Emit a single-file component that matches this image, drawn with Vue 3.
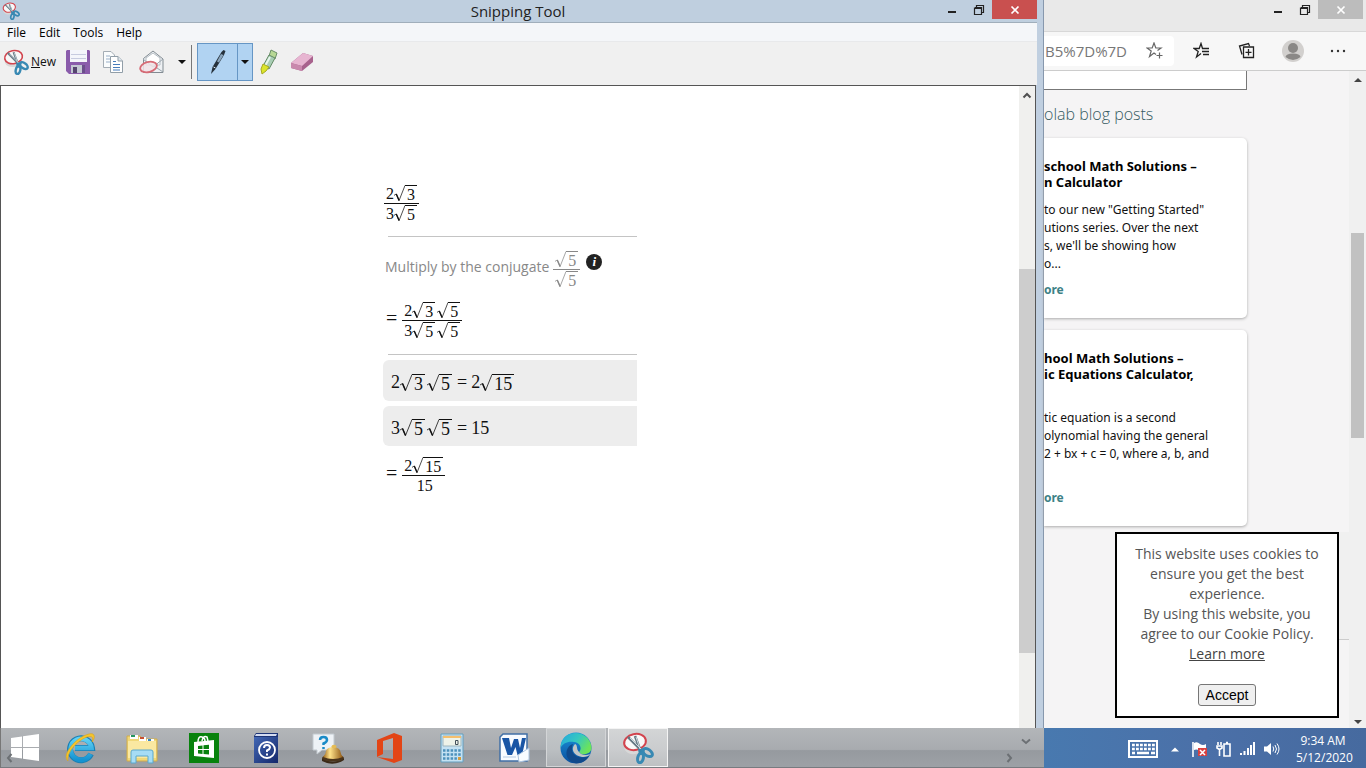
<script setup>
const menus = ['File', 'Edit', 'Tools', 'Help']

const steps = {
  first: { top: [{ n: '2' }, { r: '3' }], bottom: [{ n: '3' }, { r: '5' }] },
  conjugate: { top: [{ r: '5' }], bottom: [{ r: '5' }] },
  product: {
    top: [{ n: '2' }, { r: '3' }, { r: '5' }],
    bottom: [{ n: '3' }, { r: '5' }, { r: '5' }]
  },
  result: { top: [{ n: '2' }, { r: '15' }], bottom: [{ n: '15' }] }
}
const notes = [
  [{ n: '2' }, { r: '3' }, { r: '5' }, { o: '=' }, { n: '2' }, { r: '15' }],
  [{ n: '3' }, { r: '5' }, { r: '5' }, { o: '=' }, { n: '15' }]
]
const rows = [
  { key: 'first', lead: false },
  { key: 'conjugate', lead: false, hint: true },
  { key: 'product', lead: true },
  { key: 'result', lead: true, notes: true }
]
const posts = [
  {
    title: ['school Math Solutions –', 'n Calculator'],
    text: ['to our new "Getting Started"', 'utions series. Over the next', "s, we'll be showing how", 'o...']
  },
  {
    title: ['hool Math Solutions –', 'ic Equations Calculator,', '\u00a0'],
    text: ['tic equation is a second', 'olynomial having the general', '2 + bx + c = 0, where a, b, and', '\u00a0']
  }
]
</script>

<template>
  <div class="desktop">
    <svg class="defs" aria-hidden="true">
      <defs>
        <symbol id="snip" viewBox="0 0 32 32">
          <ellipse cx="13" cy="14" rx="11" ry="8" transform="rotate(-12 13 14)" fill="#d8d8d8" />
          <ellipse cx="13" cy="10" rx="11" ry="8" transform="rotate(-12 13 10)" fill="#f8f8f8" stroke="#d2444e" stroke-width="2" />
          <path d="M6 5 L21 20 M13 4 L19 20" stroke="#667984" stroke-width="2.600" />
          <path d="M8 6 L20 18 M14 5 L18 17" stroke="#d6e2e8" stroke-width="0.900" />
          <path d="M16 17 L23 17 L22 22 L17 23Z" fill="#3a85ab" />
          <ellipse cx="25.500" cy="20.500" rx="5.500" ry="3.200" transform="rotate(35 25.500 20.500)" fill="none" stroke="#3889b3" stroke-width="3" />
          <ellipse cx="18.500" cy="26" rx="2.800" ry="4.800" transform="rotate(12 18.500 26)" fill="none" stroke="#3889b3" stroke-width="3" />
        </symbol>
        <symbol id="restore" viewBox="0 0 12 12">
          <path d="M3.500 3 V1.500 H10.500 V8.500 H9 M2 3.500 H8.500 V10.500 H1.500 V3.500 M2 4.500 H8" fill="none" stroke="#222" stroke-width="1.200" />
        </symbol>
        <linearGradient id="edgeTop" x1="0" y1="0" x2="1" y2="0.500">
          <stop offset="0" stop-color="#25a6e0" /><stop offset="0.550" stop-color="#35c8c0" /><stop offset="1" stop-color="#6be35b" />
        </linearGradient>
        <linearGradient id="edgeSide" x1="0" y1="0" x2="0" y2="1">
          <stop offset="0" stop-color="#1b93dc" /><stop offset="1" stop-color="#0b4f9c" />
        </linearGradient>
        <linearGradient id="book" x1="0" y1="0" x2="1" y2="1">
          <stop offset="0" stop-color="#4267b4" /><stop offset="1" stop-color="#14286b" />
        </linearGradient>
        <linearGradient id="ie" x1="0" y1="0" x2="0" y2="1">
          <stop offset="0" stop-color="#5fd0f5" /><stop offset="1" stop-color="#1593d1" />
        </linearGradient>
        <linearGradient id="bell" x1="0" y1="0" x2="1" y2="0">
          <stop offset="0" stop-color="#9c6419" /><stop offset="0.350" stop-color="#ffe28a" /><stop offset="1" stop-color="#8d5614" />
        </linearGradient>
      </defs>
    </svg>

    <main class="snip-window">
      <header class="titlebar">
        <svg class="app-icon"><use href="#snip" /></svg>
        <h1>Snipping Tool</h1>
        <div class="controls">
          <button aria-label="Minimize"><i class="dash"></i></button>
          <button aria-label="Restore"><svg width="12" height="12"><use href="#restore" /></svg></button>
          <button class="close" aria-label="Close"><svg width="10" height="10" viewBox="0 0 10 10"><path d="M1.500 1.500 L8.500 8.500 M8.500 1.500 L1.500 8.500" stroke="#fff" stroke-width="1.700" /></svg></button>
        </div>
      </header>
      <nav class="menubar"><button v-for="m in menus" :key="m">{{ m }}</button></nav>
      <div class="toolbar">
        <button class="new"><svg width="26" height="26"><use href="#snip" /></svg><span><u>N</u>ew</span></button>
        <button class="tool" aria-label="Save">
          <svg width="24" height="24" viewBox="0 0 24 24"><path d="M1 0 H23 L24 1 V24 H3 L0 21 V1Z" fill="#8a5cab" /><path d="M4 0 H21 V12 H4Z" fill="#f4f5fb" /><path d="M5 4.500 H20 M5 8.500 H20" stroke="#c7cbe0" /><path d="M5 15 H19 V23 H5Z" fill="#c4c8d3" /><path d="M7 17 H11 V23 H7Z" fill="#55456f" /><path d="M16 15 H19 V23 H16Z" fill="#6b4f8b" /></svg>
        </button>
        <button class="tool copy" aria-label="Copy">
          <svg width="24" height="24" viewBox="0 0 24 24"><path d="M2.500 1.500 H10 L13.500 5 V17.500 H2.500Z" fill="#fafcfd" stroke="#a4adb5" /><path d="M5 6 H9 M5 9 H11 M5 12 H11" stroke="#9ab0c9" /><path d="M9.500 6.500 H17 L21.500 11 V22.500 H9.500Z" fill="#fff" stroke="#919ea8" /><path d="M17 6.500 V11 H21.500" fill="#dfe6ec" stroke="#919ea8" /><path d="M12 11.500 H15 M12 14.500 H19 M12 17.500 H19 M12 20 H19" stroke="#477dbb" /></svg>
        </button>
        <button class="tool send" aria-label="Send snip">
          <svg width="26" height="24" viewBox="0 0 26 24"><path d="M4.500 8.500 L14 1 L24 9 V22.500 H4.500Z" fill="#eef1f4" stroke="#828b92" /><path d="M7 8 L14 3 L21 8 V15 H7Z" fill="#fff" stroke="#b5bdc3" /><path d="M24 9 L14 17 L4 9 M15 16 L24 22" fill="none" stroke="#9aa5ad" /><ellipse cx="9.500" cy="17" rx="8.500" ry="5" transform="rotate(-15 9.500 17)" fill="#f1e4e7" fill-opacity=".85" stroke="#d66a75" stroke-width="1.800" /></svg>
        </button>
        <button class="arrow" aria-label="Send options"></button>
        <span class="divider"></span>
        <div class="pen">
          <button aria-label="Pen"><svg width="18" height="26" viewBox="0 0 18 26"><path d="M14.500 1 L16.500 2 L15 6 L6.500 20 L2 25 L3.500 18 L12.500 3Z" fill="#26313c" /><path d="M12 5 L14.500 6 L10 13.500 L8 12.500Z" fill="#8aa5bd" /><path d="M4.500 18 L6.500 19" stroke="#dce7f0" /></svg></button>
          <button class="arrow" aria-label="Pen options"></button>
        </div>
        <button class="marker" aria-label="Highlighter"><svg width="18" height="26" viewBox="0 0 18 26"><path d="M11 1 L17 4 L15 10 L9 7Z" fill="#b7d895" stroke="#6a8e68" /><path d="M9 6 L15 9 L9 20 L3 17Z" fill="#a9cdb5" stroke="#638a65" /><path d="M10 8 L5 17" stroke="#e7f5ec" stroke-width="2" /><path d="M3 15 L9 18 L6 22 L2 25 L1 20Z" fill="#dce52c" stroke="#a6aa23" /></svg></button>
        <button class="eraser" aria-label="Eraser"><svg width="24" height="22" viewBox="0 0 24 22"><path d="M1 12 L13 2 L23 5 V11 L12 20 L1 17Z" fill="#a8628d" /><path d="M1 12 L13 2 L23 5 L12 15Z" fill="#e7b5d1" /><path d="M1 12 L12 15 V20 L1 17Z" fill="#c988ad" /></svg></button>
      </div>

      <div class="canvas">
        <section class="solution">
          <div v-for="row in rows" :key="row.key" class="block">
            <template v-if="row.notes">
              <div v-for="(note, i) in notes" :key="i" class="note math">
                <template v-for="(t, j) in note" :key="j">
                  <span v-if="t.r" class="root"><svg viewBox="0 0 12 18" preserveAspectRatio="none"><path d="M0 11 L2.500 9.500 L5.500 16.500 L12 0.500" fill="none" stroke="currentColor" stroke-width="0.800" /><path d="M2.500 9.500 L5.500 16.500" stroke="currentColor" stroke-width="1.500" /></svg><span>{{ t.r }}</span></span>
                  <span v-else :class="{ op: t.o }">{{ t.n || t.o }}</span>
                </template>
              </div>
            </template>
            <div class="line" :class="{ hint: row.hint }">
              <p v-if="row.hint">Multiply by the conjugate</p>
              <span v-if="row.lead" class="equals">=</span>
              <span class="fraction">
                <span v-for="part in ['top', 'bottom']" :key="part" class="part math">
                  <template v-for="(t, j) in steps[row.key][part]" :key="j">
                    <span v-if="t.r" class="root"><svg viewBox="0 0 12 18" preserveAspectRatio="none"><path d="M0 11 L2.500 9.500 L5.500 16.500 L12 0.500" fill="none" stroke="currentColor" stroke-width="0.800" /><path d="M2.500 9.500 L5.500 16.500" stroke="currentColor" stroke-width="1.500" /></svg><span>{{ t.r }}</span></span>
                    <span v-else>{{ t.n }}</span>
                  </template>
                </span>
              </span>
              <button v-if="row.hint" class="info" aria-label="Information">i</button>
            </div>
          </div>
        </section>
        <div class="snip-scroll">
          <svg width="10" height="7" viewBox="0 0 10 7"><path d="M1.500 5.500 L5 2 L8.500 5.500" fill="none" stroke="#505050" stroke-width="2" /></svg>
          <i></i>
        </div>
      </div>
    </main>

    <section class="browser">
      <header class="browser-title">
        <button aria-label="Minimize"><i class="dash"></i></button>
        <button aria-label="Restore"><svg width="12" height="12"><use href="#restore" /></svg></button>
        <button class="close" aria-label="Close"><svg width="10" height="10" viewBox="0 0 10 10"><path d="M1.500 1.500 L8.500 8.500 M8.500 1.500 L1.500 8.500" stroke="#fff" stroke-width="1.700" /></svg></button>
      </header>
      <div class="browser-bar">
        <div class="address">
          <input aria-label="Address" value="B5%7D%7D" />
          <button aria-label="Add favorite"><svg width="18" height="18" viewBox="0 0 18 18" fill="none" stroke="#666" stroke-width="1.200"><path d="M10 12.500 L8 11 L3.500 14.500 L5.200 9 L1 6 H6.200 L8 1 L9.800 6 H15 L11.500 8.500 M13.500 10.500 V16.500 M10.500 13.500 H16.500" /></svg></button>
        </div>
        <button aria-label="Favorites"><svg width="18" height="18" viewBox="0 0 18 18" fill="none" stroke="#222" stroke-width="1.300"><path d="M8 11.500 L3.500 15 L5.200 9.500 L1 6.500 H6.200 L8 1.500 L9.500 6.500 M9 6.500 H16 M9 9.500 H16 M10 12.500 H16" /></svg></button>
        <button aria-label="Collections"><svg width="18" height="18" viewBox="0 0 18 18" fill="none" stroke="#222" stroke-width="1.300"><path d="M4 12.500 L1.500 4 L10.500 1.500 L11.500 4 M5.500 5 H15.500 V15.500 H5.500Z M10.500 7 V13.500 M7.500 10.300 H13.500" /></svg></button>
        <button aria-label="Profile"><svg width="24" height="24" viewBox="0 0 24 24"><circle cx="12" cy="12" r="11" fill="#d2d0ce" /><circle cx="12" cy="9" r="5" fill="#8a8886" /><path d="M4.500 18 Q5 14.500 12 14.500 T19.500 18 Q12 24 4.500 18Z" fill="#8a8886" /></svg></button>
        <button aria-label="More"><svg width="18" height="4" viewBox="0 0 18 4" fill="#333"><circle cx="3" cy="2" r="1.200" /><circle cx="9" cy="2" r="1.200" /><circle cx="15" cy="2" r="1.200" /></svg></button>
      </div>
      <div class="page">
        <div class="page-body">
          <div class="field"></div>
          <h2>olab blog posts</h2>
          <article v-for="(p, i) in posts" :key="i">
            <h3><span v-for="l in p.title" :key="l">{{ l }}</span></h3>
            <p><span v-for="l in p.text" :key="l">{{ l }}</span></p>
            <a href="#">ore</a>
          </article>
        </div>
        <div class="page-scroll"><i class="up"></i><i class="thumb"></i><i class="down"></i></div>
        <div class="panel-edge"></div>
        <aside class="cookies">
          <p>This website uses cookies to<br />ensure you get the best<br />experience.<br />By using this website, you<br />agree to our Cookie Policy.<br /><a href="#">Learn more</a></p>
          <button>Accept</button>
        </aside>
      </div>
    </section>

    <footer class="taskbar">
      <div class="apps">
        <button class="start" aria-label="Start"><svg width="28" height="28" viewBox="0 0 28 28" fill="#fff"><path d="M0 4 L11 2.500 V13 H0Z M12 2.300 L28 0 V13 H12Z M0 14 H11 V24.500 L0 23Z M12 14 H28 V27 L12 24.700Z" /></svg></button>
        <button aria-label="Internet Explorer"><svg width="32" height="32" viewBox="0 0 32 32"><path d="M27 22 A11 11 0 1 1 28 16 H11" fill="none" stroke="#1980b5" stroke-width="6" /><path d="M26.500 22 A10.500 10.500 0 1 1 27.500 16 H11" fill="none" stroke="url(#ie)" stroke-width="4.600" /><path d="M4 29 C-3 23 12 5 25 2 C32 0 31 7 28 10 C30 4 27 4 23 5 C12 9 2 22 4 29Z" fill="#f5c52c" stroke="#d9a31b" stroke-width=".6" /></svg></button>
        <button aria-label="File Explorer"><svg width="32" height="32" viewBox="0 0 32 32"><path d="M1 4 H14 L16 7 H31 V29 H1Z" fill="#f1d878" stroke="#d1ac4b" /><path d="M4 3 H12 V7 H4Z M13 5 H20 V9 H13Z M21 7 H28 V10 H21Z" fill="#fff" /><path d="M5 3 H9 V5 H5Z" fill="#26965f" /><path d="M14 5 H18 V7 H14Z" fill="#c85032" /><path d="M22 7 H25 V9 H22Z" fill="#3987bc" /><path d="M2 9 H30 V26 H2Z" fill="#fae8a1" /><path d="M5 31 V20 Q5 18 7 18 H25 Q27 18 27 20 V31 H22 V24 H10 V31Z" fill="#a6dcf5" stroke="#5ba8cd" /></svg></button>
        <button aria-label="Store"><svg width="30" height="30" viewBox="0 0 30 30"><path d="M0 0 H30 V30 H0Z" fill="#08820d" /><path d="M5 9 L25 7 V25 L5 23Z" fill="#fff" /><path d="M9 9 Q9 3 13 4 Q16 5 16 8 M13 8 Q14 2 18 4 L19 8" fill="none" stroke="#fff" stroke-width="1.500" /><path d="M9 13 L13.500 12.500 V16 H9Z M14.500 12.300 L20 11.800 V16 H14.500Z M9 17 H13.500 V21 L9 20.500Z M14.500 17 H20 V21.600 L14.500 21.100Z" fill="#08820d" /></svg></button>
        <button aria-label="Help"><svg width="28" height="32" viewBox="0 0 28 32"><path d="M2 4 L4 1 H26 V29 L24 31 H2Z" fill="#1d3577" /><path d="M4 2 H25 L24 4 H3Z" fill="#d4dcf1" /><path d="M2 5 H26 V31 H2Z" fill="url(#book)" /><circle cx="15" cy="18" r="8" fill="none" stroke="#fff" stroke-width="1.800" /><path d="M12 16 Q12 13 15 13 Q18 13 18 15.500 Q18 17 15 18.500 V20 M15 21.500 V23.500" fill="none" stroke="#fff" stroke-width="2" /></svg></button>
        <button aria-label="Support"><svg width="32" height="32" viewBox="0 0 32 32"><path d="M1 2 H22 V18 H10 L5 22 V18 H1Z" fill="#eef2f6" stroke="#c2c9cf" /><path d="M8 8 Q8 5 11.500 5 Q15 5 15 8 Q15 10 11.500 11.500 V13 M11.500 15 V17" fill="none" stroke="#1b8bc7" stroke-width="2.500" /><path d="M10 26 Q21 33 32 26 V28 Q21 35 10 29Z" fill="#3b2a18" /><ellipse cx="21" cy="26" rx="11" ry="3.500" fill="#4b351c" /><path d="M11 25 Q14 22 14 19 Q15 15 22 15 Q28 16 28.500 20 Q29 23 31 25 Q21 29 11 25Z" fill="url(#bell)" /><ellipse cx="22" cy="14.500" rx="2.500" ry="1.800" fill="#e6bc54" /></svg></button>
        <button aria-label="Office"><svg width="26" height="30" viewBox="0 0 26 30"><path d="M0 7 L17 0 L25 3 V27 L17 30 L0 24 L16 26 V5 L6 8 V21 L0 24Z" fill="#e34516" /></svg></button>
        <button aria-label="Calculator"><svg width="24" height="30" viewBox="0 0 24 30"><path d="M1 1 H23 V29 H1Z" fill="#c4e2f3" stroke="#629ebe" /><path d="M3 3 H21 V13 H3Z" fill="#eef3e9" stroke="#9eb6bf" /><path d="M3 3 H21 V5 H3Z" fill="#f3bf6e" /><path d="M15.500 7.500 H18 V11.500 H15.500Z" fill="none" stroke="#44515a" /><path d="M3 17.500 H21 M3 21.500 H21 M3 25.500 H21" stroke="#4c91bb" stroke-width="2.500" stroke-dasharray="2.500 1.300" /><path d="M18 24 H21 V27 H18Z" fill="#d59d3d" /></svg></button>
        <button aria-label="Word"><svg width="32" height="30" viewBox="0 0 32 30"><path d="M5 1 H29 V28 H2 V4Z" fill="#f8fbff" stroke="#4170a6" stroke-width="1.500" /><path d="M4 5 H11 L13 15 L16 6 H20 L22 15 L24 5 H28 L24 22 H19.500 L17.500 14 L14 22 H9.500Z" fill="#1955a5" /><path d="M20 22 L31 15 V27 L21 29Z" fill="#f9fcff" stroke="#adc4de" /><path d="M5 24 H18" stroke="#b6cbe3" /></svg></button>
        <button class="open" aria-label="Edge"><svg width="32" height="32" viewBox="0 0 32 32"><circle cx="16" cy="16" r="15.500" fill="url(#edgeSide)" /><path d="M1 12 C4 -3 29 -3 31.500 15 C32 23 21 24 19 20 C22 17 21 11 14 10 C8 9 3 11 0.500 16Z" fill="url(#edgeTop)" /><path d="M13 12 C9 21 17 29 29 24 C26 30 19 32 15 31 C3 28 5 14 13 12Z" fill="#114a8b" /><path d="M19 20 C16 17 18 13 15 12 C10 17 14 24 22 25 C27 25 29 24 30 22 C26 24 21 23 19 20Z" fill="#c2c6c8" /></svg></button>
        <button class="open current" aria-label="Snipping Tool"><svg width="32" height="32"><use href="#snip" /></svg></button>
        <svg class="peek left" viewBox="0 0 7 10"><path d="M5.500 1 L2 5 L5.500 9" /></svg>
        <svg class="peek right" viewBox="0 0 7 10"><path d="M1.500 1 L5 5 L1.500 9" /></svg>
        <svg class="peek bottom" viewBox="0 0 10 7"><path d="M1 1.500 L5 5 L9 1.500" /></svg>
      </div>
      <div class="tray">
        <button aria-label="Keyboard"><svg width="30" height="18" viewBox="0 0 30 18"><path d="M1 1 H29 V17 H1Z" fill="none" stroke="#fff" stroke-width="2" /><path d="M4 5 H27 M4 9 H27" stroke="#fff" stroke-width="2.500" stroke-dasharray="2.800 1.200" /><path d="M4 13 H7 M9 13 H21 M23 13 H27" stroke="#fff" stroke-width="2.500" /></svg></button>
        <button aria-label="Hidden icons"><svg width="8" height="5" viewBox="0 0 8 5"><path d="M0 4.500 L4 0.500 L8 4.500Z" fill="#fff" /></svg></button>
        <button aria-label="Action center"><svg width="16" height="16" viewBox="0 0 16 16"><path d="M1 1 V16" stroke="#fff" stroke-width="1.600" /><path d="M2 2 Q5 0 8 3 Q11 5 14 3 V10 Q9 12 7 9 Q4 8 2 9Z" fill="#fff" /><path d="M6 7 H15 V15 H6Z" fill="#d94141" /><path d="M8 9 L13 14 M13 9 L8 14" stroke="#fff" stroke-width="1.500" /></svg></button>
        <button aria-label="Power"><svg width="16" height="16" viewBox="0 0 16 16" fill="none" stroke="#fff" stroke-width="1.600"><path d="M2 1 V4 M5 1 V4 M1 5 H6 V7 L3.500 8.500 L1 7Z M3.500 9 V15" /><path d="M8 3 H14 V15 H8Z M10 1.500 H12" /></svg></button>
        <button aria-label="Network"><svg width="16" height="14" viewBox="0 0 16 14" fill="#fff"><path d="M0 11 H2 V13 H0Z M3.500 9 H5.500 V13 H3.500Z M7 6 H9 V13 H7Z M10 3 H12 V13 H10Z M13 0 H15 V13 H13Z" /></svg></button>
        <button aria-label="Volume"><svg width="16" height="14" viewBox="0 0 16 14"><path d="M0 4.500 H3 L7 1 V13 L3 9.500 H0Z" fill="#fff" /><path d="M9 4.500 Q10.500 7 9 9.500 M11 3 Q14 7 11 11 M13 1.500 Q17 7 13 12.500" fill="none" stroke="#fff" /></svg></button>
        <time><span>9:34 AM</span><span>5/12/2020</span></time>
      </div>
    </footer>
  </div>
</template>

<style>
html, body { margin: 0; overflow: hidden; }
</style>

<style scoped>
* { box-sizing: border-box; }
button { border: 0; padding: 0; margin: 0; background: none; font: inherit; color: inherit; display: flex; align-items: center; justify-content: center; }
svg { display: block; flex: none; }
h1, h2, h3, p { margin: 0; font-weight: 400; }
.defs { position: absolute; width: 0; height: 0; }
.desktop { position: relative; height: 100vh; display: grid; grid-template-columns: minmax(0, 1fr) 322px; overflow: hidden; font: 13px/18px "Noto Sans", sans-serif; color: #111; background: #f5f4f5; }

.snip-window { display: flex; flex-direction: column; min-width: 0; background: #c0cfe0; border-right: 1px solid #8798ad; padding-right: 6px; }
.titlebar { height: 23px; flex: none; display: flex; align-items: center; border-bottom: 1px solid #a0aebb; background: #bfcfdf; }
.app-icon { width: 18px; height: 18px; margin-left: 2px; }
h1 { flex: 1; text-align: center; padding-left: 78px; font: 15px/22px "Open Sans", sans-serif; color: #222; }
.controls { display: flex; align-self: flex-start; height: 19px; }
.controls button, .browser-title button { width: 27px; height: 19px; }
.controls .close, .browser-title .close { width: 45px; background: #c9504f; }
.dash { width: 8px; height: 2px; background: #222; margin-top: 4px; }
.menubar { height: 19px; flex: none; display: flex; gap: 13px; padding: 2px 0 0 7px; background: #f4f6f9; border-bottom: 1px solid #e8e9eb; font: 12px/16px "Open Sans", sans-serif; color: #000; }
.toolbar { height: 43px; flex: none; display: flex; align-items: center; background: #f0f0f0; padding: 0 3px 3px 3px; }
.new { gap: 2px; font: 12px/18px "Open Sans", sans-serif; width: 56px; justify-content: flex-start; }
.tool { width: 37px; }
.copy { width: 34px; }
.send { width: 43px; }
.toolbar > .arrow { width: 18px; }
.arrow::after { content: ""; border: 4px solid transparent; border-top-color: #111; border-bottom: 0; }
.divider { width: 1px; height: 34px; background: #777; margin-right: 5px; }
.pen { display: flex; height: 38px; background: #b1d3f2; border: 1px solid #6696c5; margin-right: 7px; }
.pen button { width: 39px; }
.pen .arrow { width: 15px; border-left: 1px solid #6696c5; }
.marker { width: 18px; }
.eraser { width: 24px; margin-left: 12px; }

.canvas { flex: 1; min-height: 0; display: flex; justify-content: space-between; background: #fff; border: 1px solid #555; margin-right: 1px; }
.solution { width: 636px; padding: 93px 0 0 382px; }
.math { display: flex; align-items: center; gap: 2px; font-family: "Liberation Serif", serif; }
.root { display: inline-flex; }
.root svg { width: 11px; height: 17px; }
.root span { border-top: 1px solid currentColor; padding: 0 2px; }
.line { display: flex; align-items: center; height: 48px; color: #111; }
.equals { font: 20px/20px "Liberation Serif", serif; margin: 0 4px 0 3px; padding-bottom: 4px; }
.fraction { display: inline-flex; flex-direction: column; margin-left: 1px; }
.part { justify-content: center; padding: 0 2px; font-size: 16px; line-height: 17px; height: 19px; }
.part .root span { height: 17px; line-height: 17px; }
.part > span:first-child:not(.root) { margin-right: -2px; }
.part + .part { border-top: 1px solid currentColor; padding-top: 1px; }
.block:nth-child(2)::before, .block:nth-child(4)::before { content: ""; display: block; height: 1px; background: #c4c4c4; margin: 9px 0 5px 5px; }
.block:nth-child(4)::before { margin-top: 10px; }
.block:nth-child(4) .line { height: 50px; }
.hint { height: 54px; color: #888; }
.hint p { font: 14px/18px "Open Sans", sans-serif; margin-left: 2px; padding-bottom: 4px; }
.hint .fraction { margin-left: 4px; }
.info { width: 16px; height: 16px; margin: 0 0 14px 6px; border-radius: 8px; background: #222; color: #fff; font: italic bold 13px/16px "Liberation Serif", serif; }
.note { height: 41px; margin-bottom: 5px; padding: 4px 0 0 8px; border-radius: 6px 0 0 6px; background: #ededed; font-size: 18px; line-height: 19px; }
.note + .note { height: 40px; margin-bottom: 4px; }
.note .root svg { width: 12px; height: 18px; }
.note .root span { height: 18px; line-height: 18px; }
.note > span:not(.root):not(.op) { margin-right: -2px; }
.note .op { margin: 0 2px 0 3px; }
.snip-scroll { width: 16px; background: #f0f0ee; display: flex; flex-direction: column; align-items: center; padding-top: 6px; }
.snip-scroll i { width: 16px; height: 384px; margin-top: 170px; background: #cdcdcd; }

.browser { display: flex; flex-direction: column; min-width: 0; padding-bottom: 40px; }
.browser-title { height: 32px; flex: none; display: flex; justify-content: flex-end; background: #e9e9e9; border-bottom: 1px solid #d8d8d8; padding-right: 3px; }
.browser-title .close { background: #bcbcbc; }
.browser-bar { height: 39px; flex: none; display: flex; align-items: center; background: #f7f7f7; border-bottom: 1px solid #ccc; padding-right: 5px; }
.browser-bar > button { flex: 1; }
.address { width: 130px; height: 30px; display: flex; align-items: center; background: #fff; border-radius: 0 4px 4px 0; margin-right: 5px; }
.address input { width: 102px; border: 0; padding: 0 0 0 1px; background: none; outline: 0; font: 15px/20px "Open Sans", sans-serif; color: #777; }
.page { flex: 1; min-height: 0; position: relative; display: flex; justify-content: space-between; }
.page-body { width: 203px; }
.field { height: 19px; background: #fff; border: solid #777; border-width: 0 1px 1px 0; }
h2 { font: 300 16px/20px "Open Sans", sans-serif; color: #355b62; margin: 14px 0; }
article { background: #fff; border-radius: 0 5px 5px 0; box-shadow: 0 1px 3px #aaa; padding: 20px 0 19px; margin-bottom: 12px; white-space: nowrap; }
article span { display: block; }
h3 { font: 700 13px/16px "Noto Sans", sans-serif; color: #000; }
article p { margin: 11px 0 8px; font-size: 12px; line-height: 18px; }
article a { display: block; font-size: 12px; font-weight: 700; color: #3d8186; text-decoration: none; }
.page-scroll { width: 17px; background: #f0f0f0; display: flex; flex-direction: column; align-items: center; padding: 7px 0 4px; }
.up { border: 4px solid transparent; border-bottom-color: #444; border-top: 0; }
.down { border: 4px solid transparent; border-top-color: #444; border-bottom: 0; margin-top: auto; }
.thumb { width: 13px; height: 205px; margin-top: 151px; background: #c1c1c1; }
.panel-edge { position: absolute; right: 17px; bottom: 88px; width: 40px; height: 108px; background: #f0f0f0; border-bottom: 1px solid #ccc; }
.cookies { position: absolute; right: 27px; bottom: 10px; width: 224px; background: #fff; border: 2px solid #000; padding: 10px 0; text-align: center; }
.cookies p { font: 14px/20px "Open Sans", sans-serif; color: #555; }
.cookies a { color: #444; }
.cookies button { margin: 20px auto 0; width: 58px; height: 22px; background: #efefef; border: 1px solid #767676; border-radius: 3px; color: #000; font: 14px/18px "Liberation Sans", sans-serif; }

.taskbar { position: absolute; left: 0; right: 0; bottom: 0; height: 40px; display: grid; grid-template-columns: minmax(0, 1fr) 322px; }
.apps { position: relative; display: flex; gap: 2px; padding-left: 1px; background: linear-gradient(#b3b6b9, #a8abaf 55%, #969a9f 58%, #9da1a6); border-left: 1px solid #777; border-bottom: 1px solid #777b80; }
.apps button { width: 60px; height: 39px; }
.apps .start { width: 46px; }
.apps .open { border: 1px solid #d3d5d7; background: linear-gradient(#c3c6c8, #bbbfc2 55%, #acb0b4); }
.apps .current { border-color: #f4f4f4; background: linear-gradient(#d3d5d6, #caccce 55%, #bec1c3); }
.peek { position: absolute; fill: none; stroke: #6c7074; stroke-width: 2; }
.left { left: 5px; bottom: 4px; width: 7px; height: 10px; }
.right { right: 31px; bottom: 4px; width: 7px; height: 10px; }
.bottom { right: 13px; bottom: 22px; width: 10px; height: 7px; }
.tray { display: flex; align-items: center; justify-content: flex-end; gap: 8px; padding: 2px 16px 0 0; background: linear-gradient(90deg, #4879af, #4b70a8 50%, #466a9f); color: #fff; }
.tray button:nth-child(1), .tray button:nth-child(2) { margin-right: 5px; }
time { display: flex; flex-direction: column; text-align: center; width: 54px; margin-left: 8px; font: 12px/17px "Open Sans", sans-serif; }
</style>
